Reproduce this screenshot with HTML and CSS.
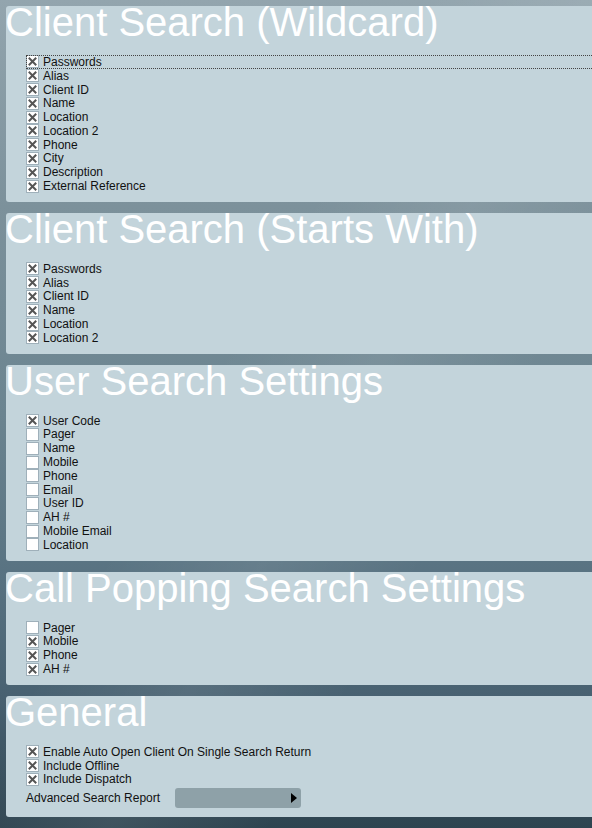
FILE: index.html
```html
<!DOCTYPE html>
<html lang="en">
<head>
  <meta charset="UTF-8" />
  <meta name="viewport" content="width=device-width, initial-scale=1.0"/>
  <title>Search Settings</title>
  <link rel="stylesheet" href="styles.css">
</head>
<body>
  <div class="panel">
    <h2 class="title">Client Search (Wildcard)</h2>
    <ul class="opts">
      <li class="opt focus"><span class="box on"></span>Passwords</li>
      <li class="opt"><span class="box on"></span>Alias</li>
      <li class="opt"><span class="box on"></span>Client ID</li>
      <li class="opt"><span class="box on"></span>Name</li>
      <li class="opt"><span class="box on"></span>Location</li>
      <li class="opt"><span class="box on"></span>Location 2</li>
      <li class="opt"><span class="box on"></span>Phone</li>
      <li class="opt"><span class="box on"></span>City</li>
      <li class="opt"><span class="box on"></span>Description</li>
      <li class="opt"><span class="box on"></span>External Reference</li>
    </ul>
  </div>

  <div class="panel">
    <h2 class="title">Client Search (Starts With)</h2>
    <ul class="opts">
      <li class="opt"><span class="box on"></span>Passwords</li>
      <li class="opt"><span class="box on"></span>Alias</li>
      <li class="opt"><span class="box on"></span>Client ID</li>
      <li class="opt"><span class="box on"></span>Name</li>
      <li class="opt"><span class="box on"></span>Location</li>
      <li class="opt"><span class="box on"></span>Location 2</li>
    </ul>
  </div>

  <div class="panel">
    <h2 class="title">User Search Settings</h2>
    <ul class="opts">
      <li class="opt"><span class="box on"></span>User Code</li>
      <li class="opt"><span class="box"></span>Pager</li>
      <li class="opt"><span class="box"></span>Name</li>
      <li class="opt"><span class="box"></span>Mobile</li>
      <li class="opt"><span class="box"></span>Phone</li>
      <li class="opt"><span class="box"></span>Email</li>
      <li class="opt"><span class="box"></span>User ID</li>
      <li class="opt"><span class="box"></span>AH #</li>
      <li class="opt"><span class="box"></span>Mobile Email</li>
      <li class="opt"><span class="box"></span>Location</li>
    </ul>
  </div>

  <div class="panel">
    <h2 class="title">Call Popping Search Settings</h2>
    <ul class="opts">
      <li class="opt"><span class="box"></span>Pager</li>
      <li class="opt"><span class="box on"></span>Mobile</li>
      <li class="opt"><span class="box on"></span>Phone</li>
      <li class="opt"><span class="box on"></span>AH #</li>
    </ul>
  </div>

  <div class="panel last">
    <h2 class="title">General</h2>
    <ul class="opts">
      <li class="opt"><span class="box on"></span>Enable Auto Open Client On Single Search Return</li>
      <li class="opt"><span class="box on"></span>Include Offline</li>
      <li class="opt"><span class="box on"></span>Include Dispatch</li>
    </ul>
    <div class="report">
      <span class="report-label">Advanced Search Report</span>
      <button class="picker"><span class="arrow"></span></button>
    </div>
  </div>

  <script>
    // draw the X mark into every ticked box
    const mark = '<svg width="9" height="9" viewBox="0 0 9 9"><path d="M1.5 1.5 L7.5 7.5 M7.5 1.5 L1.5 7.5" stroke="#555" stroke-width="2" stroke-linecap="square"/></svg>';
    document.querySelectorAll(".box.on").forEach(b => b.innerHTML = mark);
  </script>
</body>
</html>
```

FILE: styles.css
```css
html {
  overflow: hidden;
}
body {
  margin: 0;
  padding: 6px 0 0 6px;
  height: 828px;
  box-sizing: border-box;
  font-family: "Liberation Sans", Arial, sans-serif;
  background:
    linear-gradient(120deg, rgba(255,255,255,0) 40%, rgba(255,255,255,0.08) 55%, rgba(255,255,255,0) 70%),
    linear-gradient(180deg, #93a5ae 0%, #7c919b 25%, #6b8490 50%, #587281 70%, #476070 85%, #2e4450 100%);
  color: #111;
}
.panel {
  background: #c3d4db;
  border-radius: 3px 0 0 3px;
  margin-right: -10px;
  margin-bottom: 11px;
  padding: 0 0 9px 0;
}
.title {
  margin: 0 0 0 -1px;
  font-size: 40px;
  font-weight: normal;
  line-height: 32px;
  color: #fff;
  white-space: nowrap;
}
.opts {
  list-style: none;
  margin: 17px 0 0 20px;
  padding: 0;
}
.opt {
  display: flex;
  align-items: center;
  font-size: 12px;
  height: 13.8px;
  white-space: nowrap;
}
.focus {
  outline: 1px dotted #444;
  outline-offset: -1px;
}
.box {
  width: 13px;
  height: 13px;
  box-sizing: border-box;
  background: #fff;
  border: 1px solid #9fb0ba;
  margin-right: 4px;
  display: flex;
  align-items: center;
  justify-content: center;
  flex-shrink: 0;
}
.box svg {
  display: block;
}
.report {
  display: flex;
  align-items: center;
  margin: 2px 0 0 20px;
  font-size: 12px;
}
.report-label {
  width: 149px;
}
.picker {
  width: 126px;
  height: 20px;
  border: none;
  border-radius: 3px;
  background: #8ea1a8;
  padding: 0 4px 0 0;
  display: flex;
  align-items: center;
  justify-content: flex-end;
}
.arrow {
  width: 0;
  height: 0;
  border-top: 5px solid transparent;
  border-bottom: 5px solid transparent;
  border-left: 6px solid #000;
}
```
